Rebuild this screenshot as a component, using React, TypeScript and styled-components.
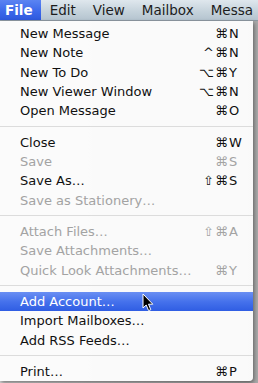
import styled, { createGlobalStyle } from "styled-components";

const GlobalStyle = createGlobalStyle`
  html, body {
    margin: 0;
    padding: 0;
    background: #8c8f94;
  }
  body {
    font-family: "DejaVu Sans", "Liberation Sans", sans-serif;
    -webkit-font-smoothing: antialiased;
  }
`;

const Screen = styled.div`
  width: 258px;
  height: 383px;
  overflow: hidden;
  display: flex;
  flex-direction: column;
  background: linear-gradient(90deg, #d8d8d8 0%, #a9a9a9 100%);
  position: relative;
`;

const MenuBar = styled.div`
  height: 20px;
  display: flex;
  align-items: stretch;
  background: linear-gradient(180deg, #dfe7ed 0%, #c6d3dc 55%, #b5c4cf 100%);
  border-bottom: 1px solid #8f9aa3;
  flex-shrink: 0;
  overflow: hidden;
`;

const BarItem = styled.div<{ $active?: boolean }>`
  display: flex;
  align-items: center;
  padding: 0 8px 0 5px;
  margin-right: 4px;
  font-size: 13.5px;
  color: ${(p) => (p.$active ? "#ffffff" : "#1c1c1c")};
  font-weight: ${(p) => (p.$active ? 600 : 400)};
  background: ${(p) =>
    p.$active ? "linear-gradient(180deg, #5b84f2 0%, #3a67ea 60%, #2e59dc 100%)" : "transparent"};
  white-space: nowrap;
`;

const Panel = styled.div`
  width: 253px;
  height: 360px;
  background: rgba(252, 252, 252, 0.97);
  box-shadow: 1px 2px 4px rgba(0, 0, 0, 0.45);
  border-bottom-right-radius: 4px;
  padding-top: 3px;
  box-sizing: border-box;
  display: flex;
  flex-direction: column;
`;

const Row = styled.div<{ $disabled?: boolean; $selected?: boolean }>`
  height: 19.4px;
  display: flex;
  align-items: center;
  padding: 0 11px 0 20px;
  font-size: 13px;
  color: ${(p) => (p.$selected ? "#ffffff" : p.$disabled ? "#a3a3a3" : "#111111")};
  background: ${(p) =>
    p.$selected ? "linear-gradient(180deg, #6a8ff3 0%, #4672ec 50%, #2f5de3 100%)" : "transparent"};
  white-space: nowrap;
`;

const Label = styled.span`
  flex: 1;
`;

const Shortcut = styled.span`
  display: flex;
  align-items: center;
`;

const Mods = styled.span`
  text-align: right;
  letter-spacing: 1px;
`;

const Key = styled.span`
  width: 13px;
  text-align: left;
`;

const Separator = styled.div`
  height: 12px;
  display: flex;
  align-items: center;
  &::after {
    content: "";
    flex: 1;
    height: 1px;
    background: #dcdcdc;
  }
`;

const Cursor = styled.svg`
  position: absolute;
  left: 142px;
  top: 293px;
  width: 12px;
  height: 19px;
`;

type Item =
  | { sep: true }
  | { label: string; mods?: string; key?: string; disabled?: boolean; selected?: boolean };

const items: Item[] = [
  { label: "New Message", mods: "⌘", key: "N" },
  { label: "New Note", mods: "^⌘", key: "N" },
  { label: "New To Do", mods: "⌥⌘", key: "Y" },
  { label: "New Viewer Window", mods: "⌥⌘", key: "N" },
  { label: "Open Message", mods: "⌘", key: "O" },
  { sep: true },
  { label: "Close", mods: "⌘", key: "W" },
  { label: "Save", mods: "⌘", key: "S", disabled: true },
  { label: "Save As…", mods: "⇧⌘", key: "S" },
  { label: "Save as Stationery…", disabled: true },
  { sep: true },
  { label: "Attach Files…", mods: "⇧⌘", key: "A", disabled: true },
  { label: "Save Attachments…", disabled: true },
  { label: "Quick Look Attachments…", mods: "⌘", key: "Y", disabled: true },
  { sep: true },
  { label: "Add Account…", selected: true },
  { label: "Import Mailboxes…" },
  { label: "Add RSS Feeds…" },
  { sep: true },
  { label: "Print…", mods: "⌘", key: "P" },
];

export default function App() {
  return (
    <>
      <GlobalStyle />
      <Screen>
        <MenuBar>
          <BarItem $active>File</BarItem>
          <BarItem>Edit</BarItem>
          <BarItem>View</BarItem>
          <BarItem>Mailbox</BarItem>
          <BarItem>Messa</BarItem>
        </MenuBar>
        <Panel>
          {items.map((it, i) =>
            "sep" in it ? (
              <Separator key={i} />
            ) : (
              <Row key={i} $disabled={it.disabled} $selected={it.selected}>
                <Label>{it.label}</Label>
                {it.key && (
                  <Shortcut>
                    <Mods>{it.mods}</Mods>
                    <Key>{it.key}</Key>
                  </Shortcut>
                )}
              </Row>
            )
          )}
        </Panel>
        <Cursor viewBox="0 0 12 19">
          <path
            d="M1 1 L1 15 L4.2 12 L6.6 17.6 L8.8 16.7 L6.5 11.2 L10.8 11.2 Z"
            fill="#000"
            stroke="#fff"
            strokeWidth="1"
            strokeLinejoin="round"
          />
        </Cursor>
      </Screen>
    </>
  );
}
